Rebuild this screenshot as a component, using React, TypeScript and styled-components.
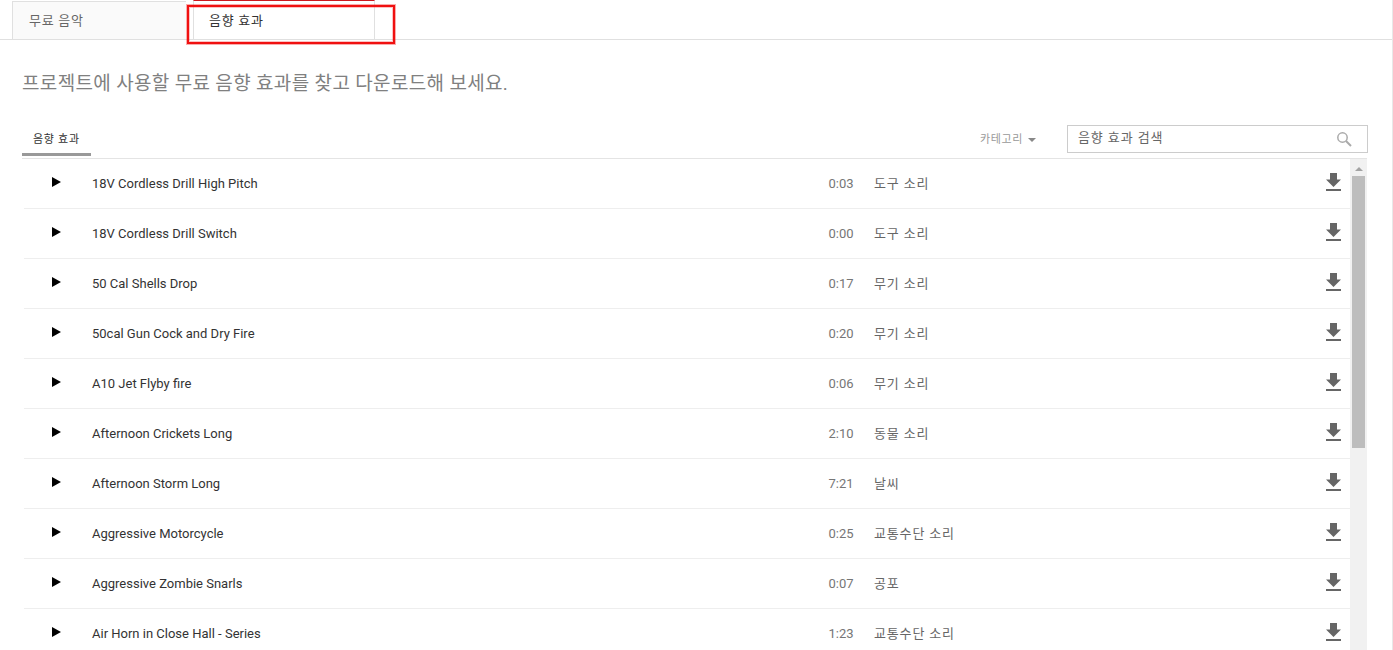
import styled, { createGlobalStyle } from 'styled-components';

const GlobalStyle = createGlobalStyle`
  html, body {
    margin: 0;
    height: 650px;
    overflow: hidden;
    background: #fff;
    font-family: Roboto, "Noto Sans CJK KR", sans-serif;
  }
  * { box-sizing: border-box; }
`;

const Page = styled.div`
  position: relative;
  width: 1393px;
  height: 650px;
  overflow: hidden;
  border-right: 1px solid #e8e8e8;
`;

const TabBar = styled.div`
  display: flex;
  height: 40px;
  padding: 1px 0 0 12px;
  gap: 7px;
  border-bottom: 1px solid #e0e0e0;
`;

const Tab = styled.div<{ $active?: boolean }>`
  width: ${p => (p.$active ? '182px' : '174px')};
  height: ${p => (p.$active ? '39px' : '38px')};
  margin-top: ${p => (p.$active ? '-1px' : '0')};
  padding: ${p => (p.$active ? '12px 0 0 15px' : '11px 0 0 16px')};
  font-size: 13px;
  letter-spacing: 0.7px;
  line-height: 16px;
  color: ${p => (p.$active ? '#333' : '#666')};
  background: ${p => (p.$active ? '#fff' : '#fafafa')};
  border: 1px solid #e0e0e0;
  border-top: ${p => (p.$active ? '1px solid #cc181e' : '1px solid #e0e0e0')};
  border-right: ${p => (p.$active ? '1px solid #e0e0e0' : 'none')};
  border-bottom: none;
`;

const Annotation = styled.div`
  position: absolute;
  left: 187px;
  top: 5px;
  width: 208px;
  height: 39px;
  border: 2px solid #f01010;
  box-shadow: 0 0 0 1px rgba(240, 16, 16, 0.35), inset 0 0 0 1px rgba(240, 16, 16, 0.25);
`;

const Content = styled.div`
  padding: 0 25px 0 22px;
`;

const Heading = styled.h1`
  margin: 0;
  padding-top: 32px;
  height: 85px;
  font-size: 19px;
  letter-spacing: 0.34px;
  line-height: 24px;
  font-weight: 400;
  color: #808080;
`;

const Toolbar = styled.div`
  display: flex;
  align-items: flex-start;
  height: 34px;
  border-bottom: 1px solid #e4e4e4;
`;

const SubTab = styled.div`
  width: 69px;
  height: 31px;
  padding: 8px 0 0 11px;
  font-size: 11px;
  letter-spacing: 0.7px;
  line-height: 14px;
  color: #333;
  border-bottom: 3px solid #999;
`;

const Category = styled.div`
  display: flex;
  align-items: center;
  gap: 5px;
  margin-left: auto;
  margin-right: 31px;
  padding-top: 8px;
  font-size: 11px;
  letter-spacing: 0.6px;
  line-height: 14px;
  color: #999;
`;

const Caret = styled.span`
  width: 0;
  height: 0;
  border-left: 4px solid transparent;
  border-right: 4px solid transparent;
  border-top: 4px solid #888;
`;

const SearchBox = styled.div`
  display: flex;
  align-items: center;
  justify-content: space-between;
  flex: none;
  width: 301px;
  height: 28px;
  margin-right: -1px;
  padding: 0 15px 0 10px;
  border: 1px solid #ccc;
  font-size: 13px;
  letter-spacing: 0.9px;
  color: #666;
`;

const SearchLabel = styled.span`
  margin-bottom: 6px;
`;

const ListArea = styled.div`
  display: flex;
`;

const List = styled.div`
  flex: 1;
  margin-left: 2px;
`;

const Row = styled.div`
  display: flex;
  align-items: center;
  height: 50px;
  border-bottom: 1px solid #eeeeee;
`;

const PlayIcon = styled.svg`
  width: 9px;
  height: 10px;
  margin: -3px 31px 0 28px;
  fill: #000;
`;

const Title = styled.div`
  flex: 1;
  font-size: 13px;
  color: #333;
`;

const Duration = styled.div`
  width: 30px;
  margin-right: 18px;
  text-align: center;
  font-size: 13px;
  color: #767676;
`;

const Genre = styled.div`
  width: 452px;
  padding-bottom: 2px;
  font-size: 13px;
  letter-spacing: 0.85px;
  color: #666;
`;

const DownloadIcon = styled.svg`
  width: 15px;
  height: 18px;
  margin: -3px 9px 0 0;
  fill: #666;
`;

const Scrollbar = styled.div`
  flex: none;
  width: 17px;
  height: 491px;
  padding: 8px 2px 0;
  background: #f1f1f1;
`;

const ScrollArrow = styled.div`
  width: 0;
  height: 0;
  margin: 0 auto 5px;
  border-left: 4px solid transparent;
  border-right: 4px solid transparent;
  border-bottom: 4px solid #a3a3a3;
`;

const ScrollThumb = styled.div`
  height: 272px;
  background: #bdbdbd;
`;

const sounds = [
  ['18V Cordless Drill High Pitch', '0:03', '도구 소리'],
  ['18V Cordless Drill Switch', '0:00', '도구 소리'],
  ['50 Cal Shells Drop', '0:17', '무기 소리'],
  ['50cal Gun Cock and Dry Fire', '0:20', '무기 소리'],
  ['A10 Jet Flyby fire', '0:06', '무기 소리'],
  ['Afternoon Crickets Long', '2:10', '동물 소리'],
  ['Afternoon Storm Long', '7:21', '날씨'],
  ['Aggressive Motorcycle', '0:25', '교통수단 소리'],
  ['Aggressive Zombie Snarls', '0:07', '공포'],
  ['Air Horn in Close Hall - Series', '1:23', '교통수단 소리'],
];

export default function App() {
  return (
    <Page>
      <GlobalStyle />
      <TabBar>
        <Tab>무료 음악</Tab>
        <Tab $active>음향 효과</Tab>
      </TabBar>
      <Annotation />
      <Content>
        <Heading>프로젝트에 사용할 무료 음향 효과를 찾고 다운로드해 보세요.</Heading>
        <Toolbar>
          <SubTab>음향 효과</SubTab>
          <Category>
            카테고리 <Caret />
          </Category>
          <SearchBox>
            <SearchLabel>음향 효과 검색</SearchLabel>
            <svg width="16" height="16" viewBox="0 0 16 16" fill="none" stroke="#aaa">
              <circle cx="6.5" cy="6.5" r="4.7" strokeWidth="1.5" />
              <path d="M10 10l5 5" strokeWidth="2" />
            </svg>
          </SearchBox>
        </Toolbar>
        <ListArea>
          <List>
            {sounds.map(([title, time, genre]) => (
              <Row key={title}>
                <PlayIcon viewBox="0 0 9 10">
                  <path d="M0 0l9 5-9 5z" />
                </PlayIcon>
                <Title>{title}</Title>
                <Duration>{time}</Duration>
                <Genre>{genre}</Genre>
                <DownloadIcon viewBox="0 0 15 18">
                  <path d="M4 0h7v6.500h4l-7.500 7.500-7.500-7.500h4zM0 16h15v2h-15z" />
                </DownloadIcon>
              </Row>
            ))}
          </List>
          <Scrollbar>
            <ScrollArrow />
            <ScrollThumb />
          </Scrollbar>
        </ListArea>
      </Content>
    </Page>
  );
}
